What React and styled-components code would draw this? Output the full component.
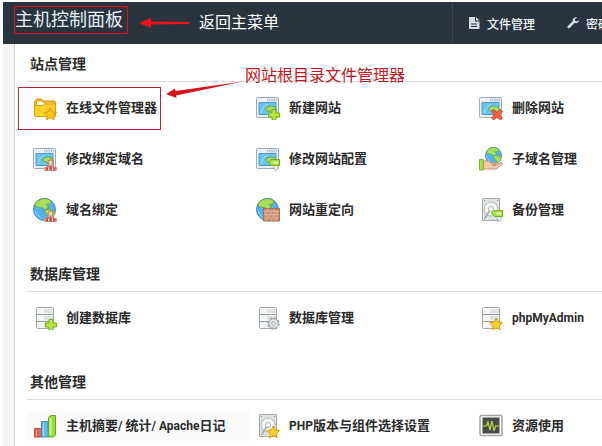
import styled, { createGlobalStyle } from "styled-components";

const GlobalStyle = createGlobalStyle`
  * {
    box-sizing: border-box;
  }
  body {
    margin: 0;
    overflow: hidden;
    background: #fff;
    color: #2b2b2b;
    font-family: Roboto, "Noto Sans CJK SC", sans-serif;
  }
`;

const Styled = {
  Page: styled.div`
    display: flex;
    flex-direction: column;
    min-height: 100vh;
    padding: 2px 0 0 3px;
  `,
  Header: styled.header`
    display: flex;
    height: 42px;
    background: #29343e;
    color: #fff;
    overflow: hidden;
  `,
  Brand: styled.div`
    display: flex;
    align-items: center;
    flex: 0 0 449px;
    padding-left: 11px;
  `,
  Title: styled.h1`
    align-self: flex-start;
    margin: 4px 11px 0 0;
    width: 114px;
    height: 28px;
    border: 1px solid #e01018;
    color: #e4eff5;
    font-size: 18px;
    font-weight: 400;
    line-height: 26px;
    white-space: nowrap;
  `,
  BrandNote: styled.span`
    margin-left: 8px;
    font-size: 16px;
    font-weight: 400;
    line-height: 20px;
  `,
  Nav: styled.nav`
    display: flex;
    flex: 1;
    gap: 32px;
    padding-left: 15px;
    border-left: 1px solid #3b4650;
    overflow: hidden;
  `,
  NavLink: styled.a`
    display: flex;
    align-items: center;
    flex: none;
    gap: 7px;
    color: #f4f6f7;
    font-size: 12px;
    font-weight: 500;
    text-decoration: none;
    white-space: nowrap;
  `,
  Body: styled.div`
    display: flex;
    flex: 1;
    padding-left: 11px;
    background: #f5f5f5;
  `,
  Panel: styled.main`
    display: flex;
    flex-direction: column;
    gap: 29px;
    flex: 1;
    min-width: 0;
    padding: 10px 0 0 12px;
    border-left: 1px solid #d2d2d2;
    background: #fff;
  `,
  Section: styled.section`
    position: relative;
  `,
  Heading: styled.h2`
    margin: 0;
    padding: 0 0 7px 3px;
    border-bottom: 1px solid #dcdcdc;
    font-size: 14px;
    font-weight: 700;
    line-height: 20px;
  `,
  Items: styled.ul`
    display: grid;
    grid-template-columns: repeat(2, 223px) 1fr;
    margin: 0;
    padding: 0;
    list-style: none;
  `,
  Item: styled.li`
    display: flex;
    align-items: center;
    height: 51px;
  `,
  ItemLink: styled.a`
    position: relative;
    display: flex;
    align-items: center;
    gap: 9px;
    height: 30px;
    padding-left: 6px;
    flex: ${({ $active }) => ($active ? "1" : "none")};
    background: ${({ $active }) => ($active ? "#fafafa" : "transparent")};
    color: #2b2b2b;
    font-size: 13px;
    font-weight: 700;
    line-height: 20px;
    text-decoration: none;
    white-space: nowrap;
  `,
  Latin: styled.span`
    font-size: 12px;
    white-space: pre;
  `,
  Marker: styled.span`
    position: absolute;
    inset: -6px -4px -7px -9px;
    border: 1px solid #b8242e;
  `,
  Callout: styled.div`
    position: absolute;
    top: 12px;
    left: 138px;
    display: flex;
    align-items: flex-start;
    gap: 2px;
    color: #c4171c;
    font-size: 16px;
    font-weight: 400;
    line-height: 20px;
    white-space: nowrap;
  `,
};

const Svg = ({ width = 24, height = 24, children }) => (
  <svg
    width={width}
    height={height}
    viewBox={`0 0 ${width} ${height}`}
    fill="none"
    aria-hidden="true"
  >
    {children}
  </svg>
);

/* badges, placed in the lower right corner of an icon */
const Plus = () => (
  <path
    d="M16 13.500h4v3.500h3.500v4H20v3h-4v-3h-3.500v-4H16z"
    fill="#b8ea3a"
    stroke="#74ad2a"
  />
);
const Cross = () => (
  <path
    d="m14.500 13.500 3.500 2.800 3.500-2.800 2 2-2.800 3.300 2.800 3.200-2 2-3.500-2.700-3.500 2.700-2-2 2.700-3.200-2.700-3.300z"
    fill="#f0633e"
    stroke="#c04028"
    strokeWidth=".8"
  />
);
const Star = ({ fill = "#ffcf2a" }) => (
  <path
    d="m17.300 12 1.900 3.800 4.300.7-3.100 3.100.7 4.100-3.800-1.900-3.800 1.900.7-4.100-3.100-3.100 4.300-.7z"
    fill={fill}
    stroke="#d29a12"
  />
);
const Stamp = () => (
  <>
    <path d="M14 20q.5-2 2-2.300-1-1.200-1-2.400a2.500 2.500 0 0 1 5 0q0 1.200-1 2.400 1.500.3 2 2.300z" fill="#f4c9b5" stroke="#b06650" strokeWidth=".8" />
    <path d="M16.500 18.500h2l1 5h-4z" fill="#e33d2e" />
    <path d="M11.500 20.500h12v3h-12z" fill="#fff" stroke="#b98f88" strokeWidth=".8" />
    <path d="M12.500 20.500h2.500v3h-2.500zM16.300 20.500h2.500v3h-2.500zM20.200 20.500h2.500v3h-2.500z" fill="#e33d2e" />
  </>
);
const Tag = () => (
  <>
    <path d="M18 17.500h4v4.500l-3 2v-2.500h-1z" fill="#f6f6f6" stroke="#a5ada5" strokeWidth=".8" />
    <path d="m12.500 15.500 2.500-3h8.500v6h-8z" fill="#a5e33c" stroke="#6eae2c" />
    <path d="M17.500 15.500H22" stroke="#fff" strokeWidth="1.500" />
  </>
);
const Gear = () => (
  <>
    <circle cx="17.500" cy="17.500" r="5.500" stroke="#979fa5" strokeWidth="1.500" strokeDasharray="2 2.320" />
    <circle cx="17.500" cy="17.500" r="4.800" fill="#e2e6e9" stroke="#979fa5" />
    <circle cx="17.500" cy="17.500" r="1.700" fill="#fff" stroke="#979fa5" />
  </>
);

const SiteIcon = ({ badge }) => (
  <Svg>
    <rect x=".5" y="1.500" width="22" height="20" rx="1" fill="#eaf0f5" stroke="#9bacbc" />
    <path d="M3 6.500h17v12H3z" fill="#6ac4f1" stroke="#4c9ccf" />
    <path d="M5 17.500c.5-5 3-8 7-9.500" stroke="#a5dff9" />
    <circle cx="12.500" cy="4" r="1.200" fill="#fff" stroke="#94a6b6" strokeWidth=".7" />
    <circle cx="16" cy="4" r="1.200" fill="#fff" stroke="#94a6b6" strokeWidth=".7" />
    <circle cx="19.500" cy="4" r="1.200" fill="#fff" stroke="#94a6b6" strokeWidth=".7" />
    <path d="M9.500 13c1-2 3.500-3 5.500-3 3 0 5 1.500 5 3.500v5h-5c1-2 0-3-2-3.500s-3.500-1-3.500-2z" fill="#a9dd58" stroke="#66a844" />
    {badge}
  </Svg>
);

const GlobeShape = () => (
  <>
    <circle cx="11.500" cy="11.500" r="11" fill="#55b2ea" stroke="#4587b8" />
    <path d="M3 4.500C6 1 11-.2 15 1.200L18 3l-1 3-4 .5 3 2.500-2 1-1 3-3-3-4-.5L2 8z" fill="#aade58" stroke="#5a9f40" strokeWidth=".8" />
    <path d="m12 12 4-1 4 2 2 1c-.5 4-3 7-6 8l-1-4-3-3z" fill="#aade58" stroke="#5a9f40" strokeWidth=".8" />
    <path d="M2 13c1 3 3 5 6 7" stroke="#9adcfa" />
  </>
);

const GlobeIcon = () => (
  <Svg>
    <GlobeShape />
    <Stamp />
  </Svg>
);

const FirewallIcon = () => (
  <Svg>
    <GlobeShape />
    <path d="M7.500 10.500h16v12.500h-16z" fill="#cf8e70" stroke="#a06b52" />
    <path
      d="M7.500 13.500h16M7.500 16.700h16M7.500 19.900h16M12 10.500v3M18 10.500v3M10 13.500v3M15 13.500v3M20 13.500v3M12 16.700v3M18 16.700v3M10 19.900v3M15 19.900v3M20 19.900v3"
      stroke="#e6bda6"
      strokeWidth=".8"
    />
  </Svg>
);

const SubdomainIcon = () => (
  <Svg>
    <g transform="translate(6 0) scale(.74)">
      <GlobeShape />
    </g>
    <path d="M4 14.500c3-1.500 6-.5 8 1.500h4c1 0 1 2 0 2h-3 4l5-2.500c1.500 0 1.500 1.500.5 2.200L17 22H4z" fill="#f3cbaa" stroke="#b98a6a" strokeWidth=".9" />
    <path d="M.5 12.500h3.800v10.500H.5z" fill="#a8e03c" stroke="#7eae38" />
  </Svg>
);

const DiskIcon = ({ badge }) => (
  <Svg>
    <path d="M3.500.5h17v22h-17z" fill="#dfe3e4" stroke="#a4aaac" />
    <circle cx="12" cy="11" r="7" fill="#f1f3f3" stroke="#b2b8ba" />
    <circle cx="12" cy="11" r="2.500" fill="#fff" stroke="#a8afb2" />
    <path d="m6 20 4.500-7" stroke="#a0a6a9" strokeWidth="1.500" />
    <path d="M5 2.500h1M18 2.500h1M5 20.500h1" stroke="#888" />
    {badge}
  </Svg>
);

const DatabaseIcon = ({ badge }) => (
  <Svg>
    <rect x="3.500" y="1.500" width="17" height="21" rx="1" fill="#f4f5f5" stroke="#a3a9aa" />
    <path d="M11 3h9v4h-9zM11 10h9v4h-9zM11 17h9v4h-9z" fill="#dfe2e3" />
    <path d="M3.500 8.500h17M3.500 15.500h17" stroke="#989e9f" />
    {badge}
  </Svg>
);

const FolderIcon = () => (
  <Svg>
    <path d="M1.500 19V5.500l2-2.500h5l2 2h10.500q1.500 0 1.500 1.500V19z" fill="#f2b521" stroke="#cf9718" />
    <path d="M4 5.500h5l1.500 2H20v2H4z" fill="#fff8da" />
    <path d="M1.500 9.500h8l2-1.500h11v12.500H3q-1.500 0-1.500-1.500z" fill="#ffcf2a" stroke="#d9a01a" />
    <Star fill="#ffc61e" />
  </Svg>
);

const ChartIcon = () => (
  <Svg>
    <path d="M1.500 14.500h7V23h-7z" fill="#ee6048" stroke="#c8463a" />
    <path d="M8.500 7.500h6.500V23H8.500z" fill="#5cbdf0" stroke="#3c8fc6" />
    <path d="m15.500 3.500 2-2h5V21l-2 2h-5z" fill="#9add38" stroke="#64a52c" />
    <path d="M17.500 4v17" stroke="#d2f485" strokeWidth="2" />
    <path d="M3.500 16.500V22M10.500 9.500V22" stroke="#fff" strokeOpacity=".5" />
  </Svg>
);

const MonitorIcon = () => (
  <Svg>
    <rect x="1" y="1.500" width="22" height="20" rx="1.500" fill="#fff" stroke="#a2a5a6" strokeWidth="1.500" />
    <path d="M3.500 3.500h17v16h-17z" fill="#474c4b" />
    <path d="M4 12h3.500L9 8l2 8 2-9 2 10 1.500-5H20" stroke="#bbda3b" strokeWidth="1.200" />
  </Svg>
);

const FileIcon = () => (
  <Svg width={12} height={14}>
    <path d="M1 1h6v4.500h4.500V13H1z" fill="#d6dbde" />
    <path d="M8 1 11.500 4.500H8z" fill="#d6dbde" />
    <path d="M3 8h6M3 10.500h6" stroke="#29343e" />
  </Svg>
);

const WrenchIcon = () => (
  <Svg width={12} height={14}>
    <path
      d="M11.800 4.200 9.500 5.500 8 4.500V3l2.200-1.500C7.500.8 5.200 2.600 5.700 5.200L.8 10.100q-.8 1 0 1.900 1 .8 1.900 0l4.900-4.900c2.600.5 4.600-.8 4.200-2.900z"
      fill="#d6dbde"
    />
  </Svg>
);

const BrandArrow = () => (
  <Svg width={52} height={12}>
    <path d="M0 6 12 1v3.500l38 .5v2l-38 .500V11z" fill="#ef1318" />
  </Svg>
);

const CalloutArrow = () => (
  <Svg width={78} height={34}>
    <path d="m1 28 9-5.500.5 2.500L78 15.500 11 29.500l.5 2.500z" fill="#d3171b" />
  </Svg>
);

const sections = [
  {
    title: "站点管理",
    callout: "网站根目录文件管理器",
    items: [
      { label: "在线文件管理器", icon: <FolderIcon />, marked: true },
      { label: "新建网站", icon: <SiteIcon badge={<Plus />} /> },
      { label: "删除网站", icon: <SiteIcon badge={<Cross />} /> },
      { label: "修改绑定域名", icon: <SiteIcon badge={<Stamp />} /> },
      { label: "修改网站配置", icon: <SiteIcon badge={<Tag />} /> },
      { label: "子域名管理", icon: <SubdomainIcon /> },
      { label: "域名绑定", icon: <GlobeIcon /> },
      { label: "网站重定向", icon: <FirewallIcon /> },
      { label: "备份管理", icon: <DiskIcon badge={<Tag />} /> },
    ],
  },
  {
    title: "数据库管理",
    items: [
      { label: "创建数据库", icon: <DatabaseIcon badge={<Plus />} /> },
      { label: "数据库管理", icon: <DatabaseIcon badge={<Gear />} /> },
      {
        label: <Styled.Latin>phpMyAdmin</Styled.Latin>,
        icon: <DatabaseIcon badge={<Star />} />,
      },
    ],
  },
  {
    title: "其他管理",
    items: [
      {
        label: (
          <>
            主机摘要<Styled.Latin>/ </Styled.Latin>统计
            <Styled.Latin>/ Apache</Styled.Latin>日记
          </>
        ),
        icon: <ChartIcon />,
        active: true,
      },
      {
        label: (
          <>
            <Styled.Latin>PHP</Styled.Latin>版本与组件选择设置
          </>
        ),
        icon: <DiskIcon badge={<Star />} />,
      },
      { label: "资源使用", icon: <MonitorIcon /> },
    ],
  },
];

const Section = ({ title, callout, items }) => (
  <Styled.Section>
    <Styled.Heading>{title}</Styled.Heading>
    <Styled.Items>
      {items.map((item, index) => (
        <Styled.Item key={index}>
          <Styled.ItemLink href="#" $active={item.active}>
            {item.icon}
            <span>{item.label}</span>
            {item.marked && <Styled.Marker />}
          </Styled.ItemLink>
        </Styled.Item>
      ))}
    </Styled.Items>
    {callout && (
      <Styled.Callout>
        <CalloutArrow />
        <span>{callout}</span>
      </Styled.Callout>
    )}
  </Styled.Section>
);

const App = () => (
  <>
    <GlobalStyle />
    <Styled.Page lang="zh-CN">
      <Styled.Header>
        <Styled.Brand>
          <Styled.Title>主机控制面板</Styled.Title>
          <BrandArrow />
          <Styled.BrandNote>返回主菜单</Styled.BrandNote>
        </Styled.Brand>
        <Styled.Nav>
          <Styled.NavLink href="#">
            <FileIcon />
            文件管理
          </Styled.NavLink>
          <Styled.NavLink href="#">
            <WrenchIcon />
            密码
          </Styled.NavLink>
        </Styled.Nav>
      </Styled.Header>
      <Styled.Body>
        <Styled.Panel>
          {sections.map((section) => (
            <Section key={section.title} {...section} />
          ))}
        </Styled.Panel>
      </Styled.Body>
    </Styled.Page>
  </>
);

export default App;
